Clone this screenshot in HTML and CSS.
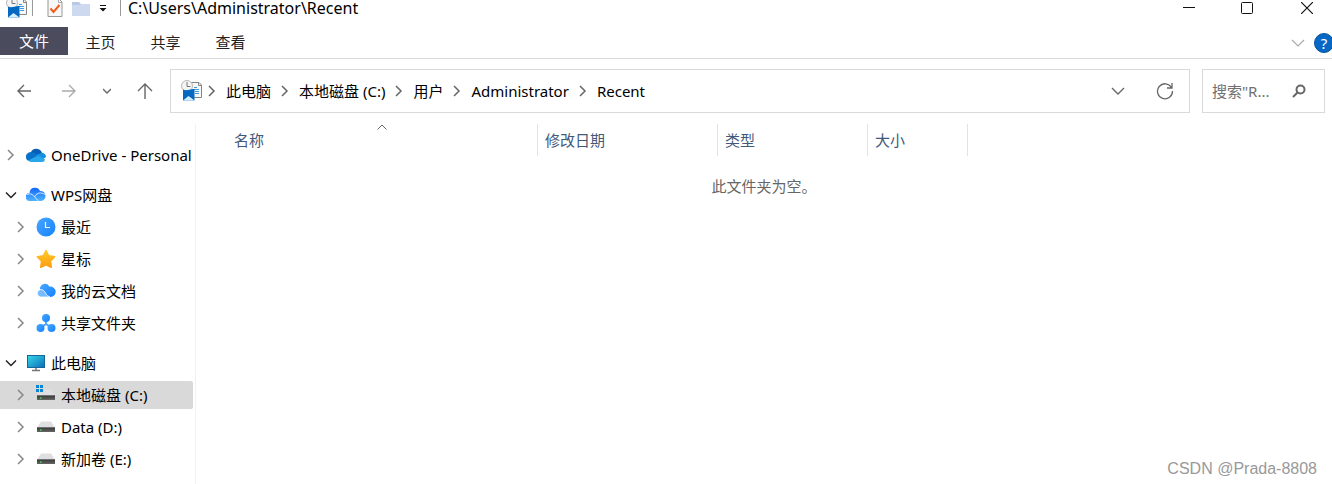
FILE: index.html
```html
<!DOCTYPE html>
<html lang="zh-CN">
<head>
  <meta charset="UTF-8">
  <meta name="viewport" content="width=device-width, initial-scale=1.0">
  <title>C:\Users\Administrator\Recent</title>
  <link rel="stylesheet" href="styles.css">
</head>
<body>
  <!-- Shared icons -->
  <svg class="sprite" aria-hidden="true">
    <defs>
      <linearGradient id="blue" x1="0" y1="0" x2="1" y2="1"><stop offset="0" stop-color="#47a6ff"/><stop offset="1" stop-color="#1682ff"/></linearGradient>
      <linearGradient id="cloud" x1="0" y1="0" x2="0" y2="1"><stop offset="0" stop-color="#1268f5"/><stop offset="1" stop-color="#4fb4ff"/></linearGradient>
      <linearGradient id="gold" x1="0" y1="0" x2="0" y2="1"><stop offset="0" stop-color="#ffc928"/><stop offset="1" stop-color="#ff9c12"/></linearGradient>
      <linearGradient id="screen" x1="0" y1="0" x2="1" y2="1"><stop offset="0" stop-color="#36dbe6"/><stop offset="1" stop-color="#0b6cbd"/></linearGradient>
      <linearGradient id="disk" x1="0" y1="0" x2="0" y2="1"><stop offset="0" stop-color="#333"/><stop offset="1" stop-color="#666"/></linearGradient>
    </defs>
    <symbol id="recent" viewBox="0 0 22 22">
      <path d="M9.500 2.500h8.500l2.500 2.500v12.500h-11z" fill="#f8f8f8" stroke="#858585"/>
      <path d="M17.500 2.500v3h3" fill="none" stroke="#858585"/>
      <path d="M13 7.500h3M13 9.500h5M14 11.500h4M14 13.500h4" stroke="#3c9be4"/>
      <circle cx="6" cy="6" r="5.500" fill="#f4f4f4" stroke="#b8b8b8"/>
      <path d="M6 2v4.500h3.500" fill="none" stroke="#777"/>
      <path d="M2 9.500c4 2 7-1 11.500-.5V20.500H2z" fill="#0669c1"/>
      <path d="M2 20.500l5.500-4.500 6 4.500z" fill="#d5efff"/>
    </symbol>
    <symbol id="next" viewBox="0 0 12 12"><path d="M3 1l5 5-5 5" fill="none" stroke="currentColor" stroke-width="1.500"/></symbol>
    <symbol id="down" viewBox="0 0 12 12"><path d="M1 3.500l5 5 5-5" fill="none" stroke="currentColor" stroke-width="1.500"/></symbol>
    <symbol id="drive" viewBox="0 0 20 20">
      <path d="M5 4.500h10l4 6H1z" fill="#dfdfe2"/>
      <rect x="1" y="10" width="18" height="5" fill="url(#disk)"/>
      <path d="M1 10.500h18" stroke="#707070"/>
      <path d="M4 13h1.500" stroke="#3ee344" stroke-width="1.500"/>
    </symbol>
  </svg>

  <div class="window">
    <header class="titlebar">
      <div class="quick-access">
        <svg class="icon-recent" aria-hidden="true"><use href="#recent"/></svg>
        <span class="divider first"></span>
        <button class="quick-btn" aria-label="属性">
          <svg width="16" height="20" viewBox="0 0 16 20"><path d="M1 1h11l3 3v14.500H1z" fill="#f7f7f7" stroke="#999"/><path d="M11.500 1v3.500H15" fill="none" stroke="#aaa"/><path d="M3.500 10.500l3 3.500 6-7" fill="none" stroke="#f05a1a" stroke-width="2"/></svg>
        </button>
        <button class="quick-btn" aria-label="新建文件夹">
          <svg width="18" height="16" viewBox="0 0 18 16"><path d="M0 2h7l2 2h9v12H0z" fill="#b8c9e4"/><path d="M0 5h7l2-1h9v12H0z" fill="#ccd9ee"/></svg>
        </button>
        <button class="quick-btn" aria-label="自定义快速访问工具栏">
          <svg width="8" height="8" viewBox="0 0 8 8"><path d="M1 1.500h6" stroke="#111"/><path d="M.5 4h7L4 7.500z" fill="#111"/></svg>
        </button>
        <span class="divider last"></span>
      </div>
      <span class="title">C:\Users\Administrator\Recent</span>
      <div class="window-controls">
        <button aria-label="最小化"><svg width="12" height="12"><path d="M0 5.500h12" stroke="#111"/></svg></button>
        <button aria-label="最大化"><svg width="12" height="12"><rect x=".5" y=".5" width="11" height="11" rx="1" fill="none" stroke="#111"/></svg></button>
        <button aria-label="关闭"><svg width="12" height="12"><path d="M0 0l12 12M12 0L0 12" stroke="#111" stroke-width="1.200"/></svg></button>
      </div>
    </header>

    <nav class="ribbon">
      <button class="tab file">文件</button>
      <button class="tab">主页</button>
      <button class="tab">共享</button>
      <button class="tab">查看</button>
      <div class="ribbon-right">
        <button class="expand" aria-label="展开功能区"><svg width="14" height="14" viewBox="0 0 14 14"><path d="M1 4l6 6 6-6" fill="none" stroke="#aaa" stroke-width="1.200"/></svg></button>
        <button class="help" aria-label="帮助">?</button>
      </div>
    </nav>

    <div class="toolbar">
      <div class="history">
        <button aria-label="后退"><svg width="16" height="16"><path d="M15 8H2M8 2L2 8l6 6" fill="none" stroke="#666" stroke-width="1.400"/></svg></button>
        <button aria-label="前进"><svg width="16" height="16"><path d="M1 8h13M8 2l6 6-6 6" fill="none" stroke="#aaa" stroke-width="1.400"/></svg></button>
        <button class="small" aria-label="最近位置"><svg width="8" height="8" viewBox="0 0 12 12"><path d="M0 3l6 6 6-6" fill="none" stroke="#666" stroke-width="2"/></svg></button>
        <button aria-label="上移"><svg width="16" height="16"><path d="M8 16V1M1 8l7-7 7 7" fill="none" stroke="#666" stroke-width="1.400"/></svg></button>
      </div>
      <div class="address">
        <svg class="icon-recent" aria-hidden="true"><use href="#recent"/></svg>
        <svg class="sep" aria-hidden="true"><use href="#next"/></svg>
        <a href="#">此电脑</a>
        <svg class="sep" aria-hidden="true"><use href="#next"/></svg>
        <a href="#">本地磁盘 (C:)</a>
        <svg class="sep" aria-hidden="true"><use href="#next"/></svg>
        <a href="#">用户</a>
        <svg class="sep" aria-hidden="true"><use href="#next"/></svg>
        <a href="#">Administrator</a>
        <svg class="sep" aria-hidden="true"><use href="#next"/></svg>
        <a href="#">Recent</a>
        <div class="address-actions">
          <button aria-label="以前的位置"><svg width="14" height="14"><path d="M1 4l6 6 6-6" fill="none" stroke="#666" stroke-width="1.400"/></svg></button>
          <button aria-label="刷新"><svg width="18" height="18"><path d="M15.500 5.500A7.500 7.500 0 1 0 16.500 9M16 1v5h-5" fill="none" stroke="#666" stroke-width="1.300"/></svg></button>
        </div>
      </div>
      <form class="search">
        <input type="text" placeholder="搜索&quot;R..." aria-label="搜索">
        <button type="button" aria-label="搜索"><svg width="14" height="14"><circle cx="8.500" cy="5.500" r="4" fill="none" stroke="#666" stroke-width="2"/><path d="M5.500 8.500L1 13" stroke="#666" stroke-width="2"/></svg></button>
      </form>
    </div>

    <div class="main">
      <aside class="sidebar">
        <div class="group">
          <a class="item root" href="#">
            <svg class="arrow" aria-hidden="true"><use href="#next"/></svg>
            <svg class="icon" viewBox="0 0 20 20"><path d="M5 7a6 6 0 0 1 11 1l-5 6-9-2z" fill="#0a5db5"/><path d="M0 13a5 5 0 0 1 5-6c3 0 5 2 8 4l-9 5a4 4 0 0 1-4-3z" fill="#0872ca"/><path d="M10 10l5-2a4 4 0 0 1 5 4l-4 3z" fill="#1590df"/><path d="M2 15.500l10-5 7 4a3 3 0 0 1-3 2.500H5a5 5 0 0 1-3-1.500z" fill="#28a8ea"/></svg>
            <span>OneDrive - Personal</span>
          </a>
        </div>
        <div class="group">
          <a class="item root" href="#">
            <svg class="arrow open" aria-hidden="true"><use href="#down"/></svg>
            <svg class="icon" viewBox="0 0 20 20"><path d="M3.500 8A5.500 5.500 0 0 1 14 6a5 5 0 0 1 1 10H4a4 4 0 0 1-.5-8z" fill="url(#cloud)"/><path d="M1 9.500c6-2.500 7 3 12 7M9 11.500c2-4 6-4.500 10-2" fill="none" stroke="#fff" stroke-width=".8"/></svg>
            <span>WPS网盘</span>
          </a>
          <a class="item" href="#">
            <svg class="arrow" aria-hidden="true"><use href="#next"/></svg>
            <svg class="icon" viewBox="0 0 20 20"><circle cx="10" cy="10" r="9.500" fill="url(#blue)"/><path d="M9.500 5v5.500H14" fill="none" stroke="#fff" stroke-width="1.200"/></svg>
            <span>最近</span>
          </a>
          <a class="item" href="#">
            <svg class="arrow" aria-hidden="true"><use href="#next"/></svg>
            <svg class="icon" viewBox="0 0 20 20"><path d="M10 1.500l2.700 5.300 6 1-4.300 4.300.9 6.200-5.300-2.500-5.300 2.500.9-6.200-4.300-4.300 6-1z" fill="url(#gold)" stroke="url(#gold)" stroke-width="1.500" stroke-linejoin="round"/></svg>
            <span>星标</span>
          </a>
          <a class="item" href="#">
            <svg class="arrow" aria-hidden="true"><use href="#next"/></svg>
            <svg class="icon" viewBox="0 0 20 20"><path d="M4 8a5 5 0 0 1 9.500-2.300A5.200 5.200 0 1 1 14.500 16H9z" fill="url(#blue)"/><path d="M4.500 8.500C7 8.500 8.500 10 9.500 12s2.500 3 4.500 4H4.500a3.800 3.800 0 0 1 0-7.500z" fill="#74bcff" stroke="#fff" stroke-width=".8"/></svg>
            <span>我的云文档</span>
          </a>
          <a class="item" href="#">
            <svg class="arrow" aria-hidden="true"><use href="#next"/></svg>
            <svg class="icon" viewBox="0 0 20 20"><path d="M10 5v6l-6 4M10 11l6 4" fill="none" stroke="#4da5ff" stroke-width="2"/><circle cx="10" cy="5" r="4" fill="url(#blue)"/><circle cx="4.500" cy="15" r="4" fill="url(#blue)"/><circle cx="15.500" cy="15" r="4" fill="url(#blue)"/></svg>
            <span>共享文件夹</span>
          </a>
        </div>
        <div class="group">
          <a class="item root" href="#">
            <svg class="arrow open" aria-hidden="true"><use href="#down"/></svg>
            <svg class="icon" viewBox="0 0 20 20"><rect x="1.500" y="2.500" width="17" height="12" fill="url(#screen)" stroke="#176599"/><path d="M10 15v2M6 17.500h8" stroke="#777" stroke-width="1.500"/></svg>
            <span>此电脑</span>
          </a>
          <a class="item selected" href="#">
            <svg class="arrow" aria-hidden="true"><use href="#next"/></svg>
            <svg class="icon" viewBox="0 0 20 20"><use href="#drive" width="20" height="20"/><path d="M0 0h8v7.500H0z" fill="#d9d9d9"/><path d="M0 0h3v3H0zM4 0h3v3H4zM0 4h3v3H0zM4 4h3v3H4z" fill="#0b83d7"/></svg>
            <span>本地磁盘 (C:)</span>
          </a>
          <a class="item" href="#">
            <svg class="arrow" aria-hidden="true"><use href="#next"/></svg>
            <svg class="icon" aria-hidden="true"><use href="#drive"/></svg>
            <span>Data (D:)</span>
          </a>
          <a class="item" href="#">
            <svg class="arrow" aria-hidden="true"><use href="#next"/></svg>
            <svg class="icon" aria-hidden="true"><use href="#drive"/></svg>
            <span>新加卷 (E:)</span>
          </a>
        </div>
      </aside>

      <main class="content">
        <table class="files">
          <thead>
            <tr>
              <th class="col-name" aria-sort="ascending">名称
                <svg class="sort" width="10" height="6" aria-hidden="true"><path d="M.5 5.500L5 1l4.500 4.500" fill="none" stroke="#666"/></svg>
              </th>
              <th class="col-date">修改日期</th>
              <th class="col-type">类型</th>
              <th class="col-size">大小</th>
            </tr>
          </thead>
        </table>
        <p class="empty">此文件夹为空。</p>
        <p class="watermark">CSDN @Prada-8808</p>
      </main>
    </div>
  </div>
</body>
</html>
```
FILE: styles.css
```css
/* General body and layout */
* {
  box-sizing: border-box;
}

body {
  margin: 0;
  font-family: "Noto Sans", "Noto Sans CJK SC", sans-serif;
  font-size: 15px;
  line-height: 20px;
  color: #000;
  background: #fff;
}

button {
  display: flex;
  align-items: center;
  justify-content: center;
  padding: 0;
  border: none;
  background: none;
  font: inherit;
  color: inherit;
}

a {
  color: inherit;
  text-decoration: none;
}

svg {
  display: block;
  flex-shrink: 0;
}

.sprite {
  position: absolute;
  width: 0;
  height: 0;
}

.window {
  display: flex;
  flex-direction: column;
  min-height: 100vh;
}

/* Title bar */
.titlebar {
  display: flex;
  align-items: center;
  height: 16px;
  margin-bottom: 11px;
}

.quick-access {
  display: flex;
  align-items: center;
  gap: 9px;
  padding-left: 6px;
}

.icon-recent {
  width: 22px;
  height: 22px;
}

.divider {
  width: 1px;
  height: 16px;
  background: #999;
}

.divider.first {
  margin: 0 5px 0 -5px;
}

.divider.last {
  margin-left: 4px;
}

.title {
  margin-left: 7px;
  font-size: 16px;
  line-height: 16px;
}

.window-controls {
  display: flex;
  margin-left: auto;
}

.window-controls button {
  width: 58px;
}

.window-controls button:last-child {
  width: 56px;
  padding-left: 6px;
}

/* Ribbon tabs */
.ribbon {
  display: flex;
  height: 32px;
  border-bottom: 1px solid #dadada;
}

.tab {
  width: 65px;
  height: 30px;
  color: #222;
}

.tab.file {
  width: 68px;
  height: 28px;
  color: #fff;
  background: #4a4b5d;
}

.ribbon-right {
  display: flex;
  align-items: center;
  gap: 9px;
  margin-left: auto;
}

.help {
  width: 20px;
  height: 20px;
  margin-right: -2px;
  border: 1px solid #07539b;
  border-radius: 50%;
  color: #fff;
  background: #0668c4;
}

/* Navigation and address bar */
.toolbar {
  display: flex;
  align-items: center;
  padding: 10px 7px 11px 0;
}

.history {
  display: flex;
  gap: 3px;
  width: 170px;
  padding-left: 3px;
}

.history button {
  width: 42px;
}

.history .small {
  width: 28px;
}

.address {
  display: flex;
  flex: 1;
  align-items: center;
  height: 44px;
  margin-right: 12px;
  padding-left: 10px;
  border: 1px solid #d9d9d9;
  white-space: nowrap;
}

.sep {
  width: 12px;
  height: 12px;
  margin: 0 8px;
  color: #666;
}

.icon-recent + .sep {
  margin-left: 3px;
}

.address-actions {
  display: flex;
  gap: 7px;
  margin-left: auto;
  padding-right: 4px;
}

.address-actions button {
  width: 40px;
}

.search {
  display: flex;
  align-items: center;
  width: 123px;
  height: 44px;
  padding: 0 18px 0 9px;
  border: 1px solid #d9d9d9;
}

.search input {
  flex: 1;
  min-width: 0;
  padding: 0;
  border: none;
  outline: none;
  font: inherit;
}

.search input::placeholder {
  color: #707070;
  opacity: 1;
}

/* Main area */
.main {
  display: flex;
  flex: 1;
}

.sidebar {
  display: flex;
  flex-direction: column;
  gap: 12px;
  width: 196px;
  padding: 17px 2px 10px 0;
  border-right: 1px solid #f2f2f2;
}

.group {
  display: flex;
  flex-direction: column;
  gap: 4px;
}

.item {
  display: flex;
  align-items: center;
  height: 28px;
  padding-left: 15px;
  border-radius: 0 2px 2px 0;
  white-space: nowrap;
  overflow: hidden;
}

.item.root {
  padding-left: 5px;
}

.item.selected {
  background: #d9d9d9;
}

.arrow {
  width: 12px;
  height: 12px;
  color: #888;
}

.arrow.open {
  color: #222;
}

.icon {
  width: 20px;
  height: 20px;
  margin: 0 5px 0 9px;
}

/* File list */
.content {
  display: flex;
  flex: 1;
  flex-direction: column;
}

.files {
  width: 741px;
  margin-left: 31px;
  border-collapse: separate;
  border-spacing: 0;
  table-layout: fixed;
}

.files th {
  position: relative;
  height: 32px;
  padding: 0 7px;
  border-right: 1px solid #e3e3e3;
  font-weight: normal;
  text-align: left;
  color: #43597a;
}

.col-name {
  width: 311px;
}

.col-date {
  width: 180px;
}

.col-type {
  width: 150px;
}

.col-size {
  width: 100px;
}

.sort {
  position: absolute;
  top: 0;
  left: 150px;
}

.empty {
  margin: 20px 0 0;
  text-align: center;
  color: #666;
}

.watermark {
  margin: auto 15px 5px auto;
  font-family: "Liberation Sans", sans-serif;
  font-size: 16px;
  color: #999;
}
```
